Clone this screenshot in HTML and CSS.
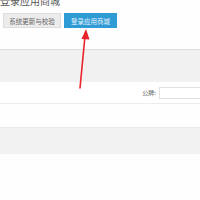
FILE: index.html
```html
<!DOCTYPE html>
<html>
<head>
<meta charset="utf-8">
<link rel="stylesheet" href="styles.css">
</head>
<body>
<div class="page">
  <div class="head">
    <div class="title">登录应用商城</div>
    <div class="btns">
      <span class="btn gray">系统更新与校验</span>
      <span class="btn blue">登录应用商城</span>
    </div>
  </div>
  <div class="band"></div>
  <div class="filter">
    <span class="label">公牌:</span>
    <span class="input"></span>
  </div>
  <div class="gap"></div>
  <div class="band2"></div>
  <div class="rest"></div>
  <svg class="arrow" width="200" height="200" viewBox="0 0 200 200">
    <line x1="80" y1="88" x2="85" y2="36" stroke="#e8242a" stroke-width="1.6" stroke-linecap="round"/>
    <polygon points="86,29 81.5,39 89.5,39.5" fill="#e8242a"/>
  </svg>
</div>
</body>
</html>
```
FILE: styles.css
```css
html, body { margin: 0; padding: 0; background: #fff; }
.page { position: relative; width: 200px; height: 200px; overflow: hidden; font-family: "Noto Sans CJK SC", "Liberation Sans", sans-serif; }
.head { height: 53px; border-bottom: 1px solid #dedede; background: #fefefe; }
.title { font-size: 10px; line-height: 10px; margin-top: -4px; margin-left: 0; color: #555; }
.btns { display: flex; gap: 3px; padding-left: 3px; margin-top: 7px; }
.btn { display: flex; align-items: center; justify-content: center; height: 15px; font-size: 6.5px; box-sizing: border-box; }
.gray { width: 58px; background: #ececec; border: 1px solid #dcdcdc; color: #666; }
.blue { width: 53px; background: #2e9bd4; color: #e8f4fb; }
.band { height: 32px; background: #f1f1f1; }
.filter { height: 21px; display: flex; align-items: center; justify-content: flex-end; border-bottom: 1px solid #ececec; background: #fff; }
.label { font-size: 6px; color: #444; margin-right: 3px; }
.input { width: 41px; height: 12px; box-sizing: border-box; border: 1px solid #e2e2e2; border-right: none; background: #fff; }
.gap { height: 23px; background: #fefefe; }
.band2 { height: 26px; background: #f2f2f2; border-top: 1px solid #ebebeb; }
.rest { height: 50px; background: #fefefe; }
.arrow { position: absolute; left: 0; top: 0; }
```
